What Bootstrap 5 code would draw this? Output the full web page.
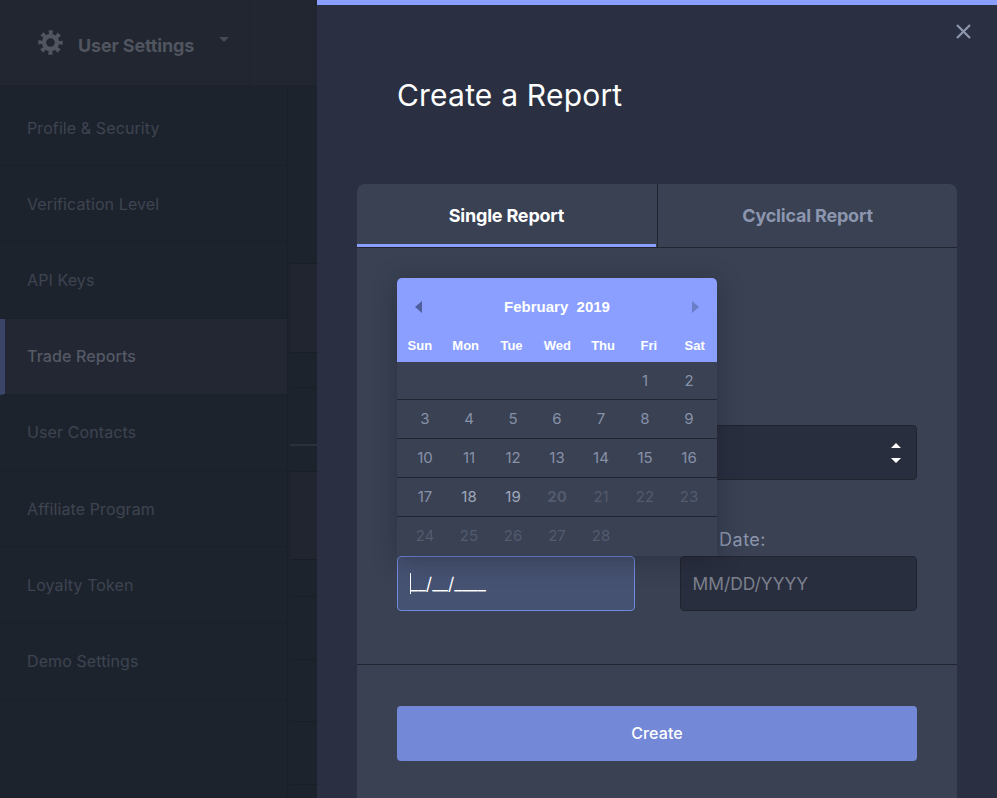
<!DOCTYPE html>
<html lang="en">
<head>
    <meta charset="UTF-8">
    <meta name="viewport" content="width=device-width, initial-scale=1.0">
    <title>Create a Report</title>
    <link href="https://cdn.jsdelivr.net/npm/bootstrap@5.3.0/dist/css/bootstrap.min.css" rel="stylesheet">
    <style>
        html, body {
            height: 798px;
            overflow: hidden;
        }
        body {
            background-color: #1d232d;
            font-family: Inter, "Liberation Sans", sans-serif;
        }
        .page-shell {
            height: 798px;
        }
        .dim-side {
            width: 317px;
            overflow: hidden;
        }
        .dim-top {
            height: 85px;
            background: #212631;
        }
        .dim-brand {
            width: 250px;
            padding-left: 38px;
            border-right: 1px solid #1d222c;
            color: #50555f;
            font-size: 18px;
            font-weight: 700;
            letter-spacing: -.15px;
        }
        .dim-brand-text {
            padding-top: 5px;
        }
        .dim-gear {
            margin-right: 15px;
        }
        .dim-caret {
            width: 0;
            height: 0;
            margin-left: 25px;
            margin-top: -7px;
            border-left: 5px solid transparent;
            border-right: 5px solid transparent;
            border-top: 5px solid #454a55;
        }
        .dim-body {
            height: 713px;
        }
        .side-menu {
            width: 288px;
            padding-top: 5px;
            border-right: 1px solid #1a1f28;
            flex: none;
        }
        .side-item {
            height: 76.2px;
            padding-left: 27px;
            color: #3e4451;
            font-size: 16px;
            letter-spacing: .1px;
            border-bottom: 1px solid #1a2029;
        }
        .side-item-on {
            background: #222733;
            color: #555a65;
            font-weight: 500;
            border-left: 5px solid #3a4569;
            padding-left: 22px;
        }
        .dim-main {
            flex: 1;
            margin-left: 2px;
        }
        .strip {
            border-bottom: 1px solid #191e27;
        }
        .strip-lite {
            background: #20252f;
        }
        .strip-line {
            border-bottom: 2px solid #2b303b;
        }
        .drawer {
            flex: 1;
            position: relative;
            background: #2a3042;
            border-top: 5px solid #8a9fff;
            padding: 0 40px;
        }
        .drawer-close {
            position: absolute;
            top: 19px;
            right: 26px;
            line-height: 0;
        }
        .drawer-title {
            margin: 70px 0 68px 40px;
            color: #fff;
            font-size: 30px;
            font-weight: 400;
            letter-spacing: .2px;
            line-height: 41px;
        }
        .report-card {
            background: #394153;
            border-radius: 8px 8px 0 0;
            height: 640px;
        }
        .report-tabs {
            height: 64px;
            border-bottom: 1px solid #20252f;
        }
        .report-tab {
            flex: 1;
            color: #8c96ae;
            font-size: 18px;
            font-weight: 700;
            letter-spacing: -.2px;
            text-decoration: none;
        }
        .report-tab-on {
            flex: none;
            width: 299px;
            margin-right: 1px;
            padding-top: 3px;
            color: #fff;
            border-bottom: 3px solid #8a9fff;
        }
        .report-tab-off {
            border-left: 1px solid #20252f;
        }
        .report-form {
            position: relative;
            height: 417px;
            padding: 177px 40px 0;
            border-bottom: 1px solid #20252f;
        }
        .field-label {
            display: block;
            height: 32px;
            margin: 0;
            color: #8c96ae;
            font-size: 18px;
            letter-spacing: .5px;
            line-height: 32px;
        }
        .field-input,
        .field-input:focus {
            height: 55px;
            padding: 0 12px;
            background-color: #292e3f;
            border: 1px solid #20242e;
            border-radius: 4px;
            box-shadow: none;
            color: #fff;
            font-size: 17.4px;
        }
        .field-input::placeholder {
            color: #7c808c;
        }
        .field-select {
            background-image: url("data:image/svg+xml,%3csvg xmlns='http://www.w3.org/2000/svg' width='10' height='20'%3e%3cpath fill='%23fff' d='M5 0l5 5H0zM5 20l-5-5h10z'/%3e%3c/svg%3e");
            background-position: right 15px center;
            background-size: 10px 20px;
            margin-bottom: 44px;
        }
        .date-row {
            gap: 45px;
        }
        .date-cell {
            flex: 1;
            position: relative;
        }
        .date-focus,
        .date-focus:focus {
            background-color: #465272;
            border-color: #7388e0;
        }
        .date-caret {
            position: absolute;
            left: 13px;
            top: 49px;
            width: 1px;
            height: 21px;
            background: #fff;
        }
        .cal-pop {
            position: absolute;
            left: 40px;
            top: 30px;
            width: 320px;
            background: #394153;
            border-radius: 5px 5px 0 0;
            box-shadow: 0 4px 24px rgba(20, 24, 32, .35);
            overflow: hidden;
        }
        .cal-head {
            height: 84px;
            background: #8a9fff;
            color: #fff;
            font-family: "Liberation Sans", Arial, sans-serif;
            font-weight: 700;
        }
        .cal-month {
            height: 58px;
            padding: 0 18px;
            font-size: 15px;
            white-space: pre;
        }
        .cal-arrow {
            width: 0;
            height: 0;
            border-top: 6px solid transparent;
            border-bottom: 6px solid transparent;
        }
        .cal-prev {
            border-right: 7px solid #4f5f9c;
        }
        .cal-next {
            border-left: 7px solid #6c7dc8;
        }
        .cal-days {
            display: grid;
            grid-template-columns: repeat(7, 45.8px);
            font-size: 13px;
            text-align: center;
        }
        .cal-row {
            display: grid;
            grid-template-columns: repeat(7, 44px);
            height: 39px;
            padding: 0 6px;
            align-items: center;
            color: #8791a8;
            font-size: 15px;
            text-align: center;
            border-bottom: 1px solid #20252f;
        }
        .cal-row-first {
            height: 38px;
            padding-top: 2px;
        }
        .cal-row:last-child {
            border-bottom: 0;
        }
        .day-near {
            color: #a0a8bb;
        }
        .day-off {
            color: #535b6e;
        }
        .day-off-b {
            font-weight: 700;
        }
        .create-btn {
            display: block;
            width: 520px;
            height: 55px;
            margin: 41px 0 0 40px;
            padding-bottom: 8px;
            background: #7388d6;
            border: 0;
            border-radius: 4px;
            color: #fff;
            font-size: 16px;
            font-weight: 500;
            letter-spacing: .1px;
        }
    </style>
</head>
<body>

<div class="page-shell d-flex">
    <div class="dim-side">
        <div class="dim-top d-flex">
            <div class="dim-brand d-flex align-items-center">
                <svg width="25" height="25" viewBox="0 0 25 25" class="dim-gear flex-shrink-0">
                    <circle cx="12.5" cy="12.5" r="6.5" fill="none" stroke="#50555f" stroke-width="4.4"/>
                    <circle cx="12.5" cy="12.5" r="10" fill="none" stroke="#50555f" stroke-width="4.5" stroke-dasharray="3.9 3.95" stroke-dashoffset="1.95"/>
                </svg>
                <span class="dim-brand-text">User Settings</span>
                <span class="dim-caret"></span>
            </div>
        </div>
        <div class="dim-body d-flex">
            <div class="side-menu">
                <div class="side-item d-flex align-items-center">Profile &amp; Security</div>
                <div class="side-item d-flex align-items-center">Verification Level</div>
                <div class="side-item d-flex align-items-center">API Keys</div>
                <div class="side-item side-item-on d-flex align-items-center">Trade Reports</div>
                <div class="side-item d-flex align-items-center">User Contacts</div>
                <div class="side-item d-flex align-items-center">Affiliate Program</div>
                <div class="side-item d-flex align-items-center">Loyalty Token</div>
                <div class="side-item d-flex align-items-center">Demo Settings</div>
            </div>
            <div class="dim-main">
                <div class="strip" style="height: 179px"></div>
                <div class="strip strip-lite" style="height: 89px"></div>
                <div class="strip" style="height: 35px"></div>
                <div class="strip strip-line" style="height: 58px"></div>
                <div class="strip" style="height: 26px"></div>
                <div class="strip strip-lite" style="height: 88px"></div>
                <div class="strip" style="height: 37px"></div>
                <div class="strip" style="height: 63px"></div>
                <div class="strip" style="height: 62px"></div>
                <div class="strip" style="height: 63px"></div>
            </div>
        </div>
    </div>

    <div class="drawer">
        <a href="#" class="drawer-close" aria-label="Close">
            <svg width="15" height="15" viewBox="0 0 15 15"><path d="M1 1l13 13M14 1L1 14" stroke="#8c96ae" stroke-width="2.2" fill="none"/></svg>
        </a>
        <h1 class="drawer-title">Create a Report</h1>

        <div class="report-card">
            <div class="report-tabs d-flex">
                <a href="#" class="report-tab report-tab-on d-flex align-items-center justify-content-center">Single Report</a>
                <a href="#" class="report-tab report-tab-off d-flex align-items-center justify-content-center">Cyclical Report</a>
            </div>
            <form class="report-form">
                <select class="form-select field-input field-select" aria-label="Report type">
                    <option></option>
                </select>
                <div class="date-row d-flex">
                    <div class="date-cell">
                        <div class="field-label"></div>
                        <input class="form-control field-input date-focus" aria-label="Start date" value="__/__/____">
                        <span class="date-caret"></span>
                    </div>
                    <div class="date-cell">
                        <label class="field-label" for="endDate">End Date:</label>
                        <input id="endDate" class="form-control field-input" placeholder="MM/DD/YYYY">
                    </div>
                </div>

                <div class="cal-pop">
                    <div class="cal-head">
                        <div class="cal-month d-flex align-items-center justify-content-between">
                            <span class="cal-arrow cal-prev"></span>
                            <span>February  2019</span>
                            <span class="cal-arrow cal-next"></span>
                        </div>
                        <div class="cal-days">
                            <span>Sun</span><span>Mon</span><span>Tue</span><span>Wed</span><span>Thu</span><span>Fri</span><span>Sat</span>
                        </div>
                    </div>
                    <div class="cal-row cal-row-first">
                        <span></span><span></span><span></span><span></span><span></span><span>1</span><span>2</span>
                    </div>
                    <div class="cal-row">
                        <span>3</span><span>4</span><span>5</span><span>6</span><span>7</span><span>8</span><span>9</span>
                    </div>
                    <div class="cal-row">
                        <span>10</span><span>11</span><span>12</span><span>13</span><span>14</span><span>15</span><span>16</span>
                    </div>
                    <div class="cal-row">
                        <span>17</span><span class="day-near">18</span><span class="day-near">19</span><span class="day-off day-off-b">20</span><span class="day-off">21</span><span class="day-off">22</span><span class="day-off">23</span>
                    </div>
                    <div class="cal-row">
                        <span class="day-off">24</span><span class="day-off">25</span><span class="day-off">26</span><span class="day-off">27</span><span class="day-off">28</span><span></span><span></span>
                    </div>
                </div>
            </form>
            <button type="button" class="btn create-btn">Create</button>
        </div>
    </div>
</div>

<script src="https://cdn.jsdelivr.net/npm/bootstrap@5.3.0/dist/js/bootstrap.bundle.min.js"></script>
</body>
</html>
